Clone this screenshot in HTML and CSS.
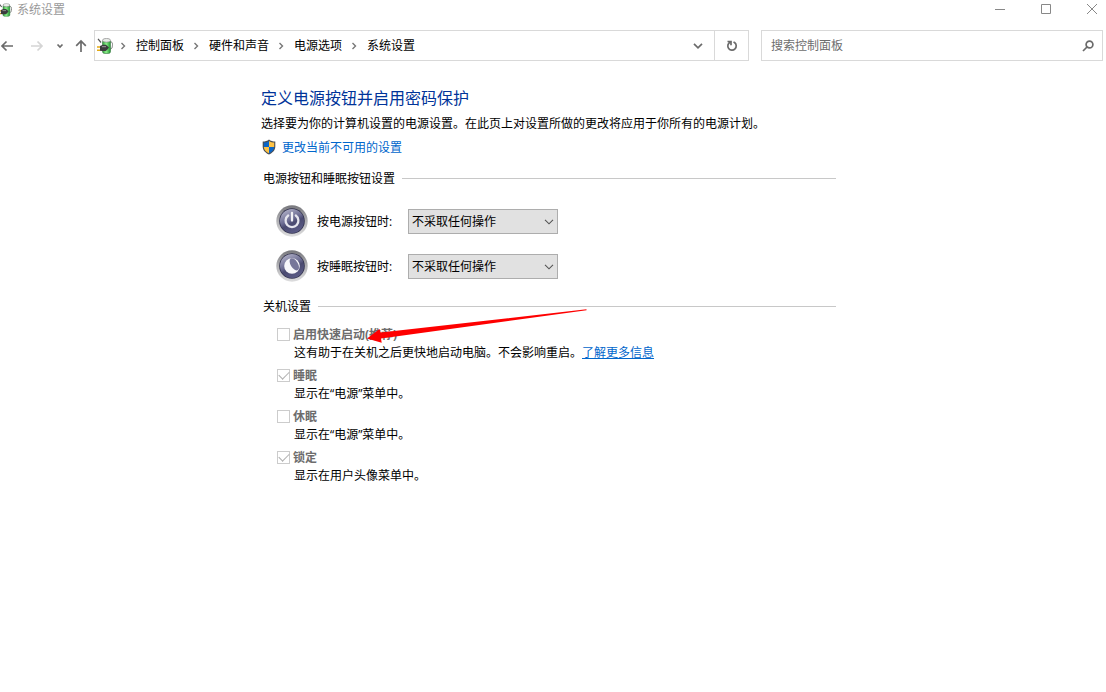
FILE: index.html
```html
<!DOCTYPE html>
<html lang="zh-CN">
<head>
<meta charset="utf-8">
<meta name="viewport" content="width=device-width, initial-scale=1">
<title>系统设置</title>
<link rel="stylesheet" href="styles.css">
</head>
<body>
<svg class="defs" width="0" height="0" aria-hidden="true">
  <defs>
    <linearGradient id="rim" x1="0" y1="0" x2="0" y2="1">
      <stop offset="0" stop-color="#77777c"/><stop offset=".5" stop-color="#b2b2b5"/><stop offset="1" stop-color="#dededf"/>
    </linearGradient>
    <linearGradient id="orb" x1=".2" y1="0" x2=".7" y2="1">
      <stop offset="0" stop-color="#b4b4ca"/><stop offset=".45" stop-color="#6c6c92"/><stop offset=".6" stop-color="#4a4a70"/><stop offset="1" stop-color="#5c5c88"/>
    </linearGradient>
    <linearGradient id="cell" x1="0" y1="0" x2="1" y2="0">
      <stop offset="0" stop-color="#2a9a38"/><stop offset=".45" stop-color="#8ff08c"/><stop offset="1" stop-color="#1f9430"/>
    </linearGradient>
    <symbol id="plug" viewBox="0 0 16 16">
      <path d="M13 4c2.500-.5 2.800 1.500 2.300 4.500-.3 2-1 2.500-2.300 2.500" fill="none" stroke="#777" stroke-width="1"/>
      <rect x="5.500" y="2" width="8" height="13.500" rx="2" fill="url(#cell)" stroke="#3d7a45" stroke-width=".6"/>
      <ellipse cx="9.500" cy="2.300" rx="4" ry="1.900" fill="#e8ece8" stroke="#777" stroke-width=".6"/>
      <path d="M1 .8l3 3.700" stroke="#555" stroke-width="1.200"/>
      <path d="M0 9h3.500M0 12.200h3.500" stroke="#e3a913" stroke-width="1.600"/>
      <path d="M3 8l3-1.300h3l3 2.800-2 2.500-1.500 1H5L3 12.800z" fill="#3b3b3d"/>
      <path d="M5 8.700h4" stroke="#99999c" stroke-width="1"/>
    </symbol>
    <symbol id="crumb" viewBox="0 0 6 8"><path d="M1.500 1l3 3-3 3" fill="none" stroke="#777" stroke-width="1.400"/></symbol>
    <symbol id="drop" viewBox="0 0 10 6"><path d="M1 .8l4 4 4-4" fill="none" stroke="#555" stroke-width="1.100"/></symbol>
  </defs>
</svg>

<header class="titlebar">
  <svg class="app-icon" viewBox="2 0 14 16" aria-hidden="true"><use href="#plug" width="16" height="16"/></svg>
  <span class="title">系统设置</span>
  <div class="window-buttons">
    <button type="button" aria-label="最小化"><svg viewBox="0 0 12 12"><path d="M1 5.500h10"/></svg></button>
    <button type="button" aria-label="最大化"><svg viewBox="0 0 12 12"><path d="M1.500 .5h9v9h-9z"/></svg></button>
    <button type="button" aria-label="关闭"><svg viewBox="0 0 12 12"><path d="M1 0l10 10M11 0L1 10"/></svg></button>
  </div>
</header>

<div class="toolbar">
  <div class="history">
    <button type="button" aria-label="后退"><svg width="14" height="12" viewBox="0 0 14 12"><path d="M13 6H2M6.500 1.500L2 6l4.500 4.500"/></svg></button>
    <button type="button" class="forward" aria-label="前进" disabled><svg width="14" height="12" viewBox="0 0 14 12"><path d="M1 6h11M7.500 1.500L12 6l-4.500 4.500"/></svg></button>
    <button type="button" class="recent" aria-label="最近的位置"><svg width="8" height="6" viewBox="0 0 8 6"><path d="M1.500 1.500L4 4l2.500-2.500"/></svg></button>
    <button type="button" aria-label="向上"><svg width="12" height="14" viewBox="0 0 12 14"><path d="M6 13V2M1.200 6.800L6 2l4.800 4.800"/></svg></button>
  </div>
  <nav class="address" aria-label="地址">
    <svg class="plug" aria-hidden="true"><use href="#plug"/></svg>
    <ol class="crumbs">
      <li><svg aria-hidden="true"><use href="#crumb"/></svg><a href="#">控制面板</a></li>
      <li><svg aria-hidden="true"><use href="#crumb"/></svg><a href="#">硬件和声音</a></li>
      <li><svg aria-hidden="true"><use href="#crumb"/></svg><a href="#">电源选项</a></li>
      <li><svg aria-hidden="true"><use href="#crumb"/></svg><a href="#">系统设置</a></li>
    </ol>
    <button type="button" class="expand" aria-label="展开"><svg width="10" height="8" viewBox="0 0 10 8"><path d="M1 1.800l4 4 4-4"/></svg></button>
    <button type="button" class="refresh" aria-label="刷新"><svg width="12" height="12" viewBox="0 0 12 12"><path d="M4 2.200A4.200 4.200 0 1 0 8.500 2.500M8.500 2.500L7.500 2M1.500 1.500h3.500v3.700"/></svg></button>
  </nav>
  <form class="search" role="search">
    <input type="search" placeholder="搜索控制面板" aria-label="搜索控制面板">
    <button type="submit" aria-label="搜索"><svg width="12" height="12" viewBox="0 0 12 12"><circle cx="7.500" cy="4.500" r="3.400"/><path d="M5 7L1 11"/></svg></button>
  </form>
</div>

<main class="page">
  <h1>定义电源按钮并启用密码保护</h1>
  <p class="intro">选择要为你的计算机设置的电源设置。在此页上对设置所做的更改将应用于你所有的电源计划。</p>
  <p class="elevate">
    <svg viewBox="0 0 14 16" aria-hidden="true">
      <path d="M7 .5C5.500 2 3 2.500.7 2.500v5c0 4 3 6.500 6.300 8 3.300-1.500 6.300-4 6.300-8v-5C11 2.500 8.500 2 7 .5z" fill="#4b4f55"/>
      <path d="M7 2C5.500 3 3.500 3.600 1.800 3.600V8H7z" fill="#0b66c8"/>
      <path d="M7 2c1.500 1 3.500 1.600 5.200 1.600V8H7z" fill="#ffc344"/>
      <path d="M1.800 8H7v6.300C4 12.900 2 11 1.800 8z" fill="#ffc344"/>
      <path d="M12.200 8H7v6.300C10 12.900 12 11 12.200 8z" fill="#0b66c8"/>
    </svg>
    <a href="#">更改当前不可用的设置</a>
  </p>

  <section>
    <h2>电源按钮和睡眠按钮设置</h2>
    <div class="actions">
      <div class="action">
        <svg class="orb" viewBox="0 0 32 32" aria-hidden="true">
          <circle cx="16" cy="16" r="15.700" fill="url(#rim)"/><circle cx="16" cy="16" r="12.800" fill="#33334f"/><circle cx="16" cy="16" r="12" fill="url(#orb)"/>
          <path d="M12.200 10.500a6.400 6.400 0 1 0 7.600 0" fill="none" stroke="#e6e6ee" stroke-width="2.300" stroke-linecap="round"/>
          <path d="M16 8v7.500" stroke="#f1f1f5" stroke-width="2.300" stroke-linecap="round"/>
        </svg>
        <label for="power">按电源按钮时:</label>
        <div class="picker">
          <select id="power"><option>不采取任何操作</option></select>
          <svg aria-hidden="true"><use href="#drop"/></svg>
        </div>
      </div>
      <div class="action">
        <svg class="orb" viewBox="0 0 32 32" aria-hidden="true">
          <circle cx="16" cy="16" r="15.700" fill="url(#rim)"/><circle cx="16" cy="16" r="12.800" fill="#33334f"/><circle cx="16" cy="16" r="12" fill="url(#orb)"/>
          <circle cx="16" cy="16" r="7.800" fill="#f7f7fa"/>
          <ellipse cx="18.300" cy="14.300" rx="3.600" ry="6.800" transform="rotate(-32 18.300 14.300)" fill="#77779a"/>
        </svg>
        <label for="sleep">按睡眠按钮时:</label>
        <div class="picker">
          <select id="sleep"><option>不采取任何操作</option></select>
          <svg aria-hidden="true"><use href="#drop"/></svg>
        </div>
      </div>
    </div>
  </section>

  <section class="shutdown">
    <h2>关机设置</h2>
    <ul class="options">
      <li>
        <input type="checkbox" id="fast" disabled>
        <label for="fast">启用快速启动(推荐)</label>
        <p>这有助于在关机之后更快地启动电脑。不会影响重启。<a href="#">了解更多信息</a></p>
      </li>
      <li>
        <input type="checkbox" id="show-sleep" checked disabled>
        <label for="show-sleep">睡眠</label>
        <p>显示在“电源”菜单中。</p>
      </li>
      <li>
        <input type="checkbox" id="hibernate" disabled>
        <label for="hibernate">休眠</label>
        <p>显示在“电源”菜单中。</p>
      </li>
      <li>
        <input type="checkbox" id="lock" checked disabled>
        <label for="lock">锁定</label>
        <p>显示在用户头像菜单中。</p>
      </li>
    </ul>
    <svg class="pointer" viewBox="0 0 220 34" aria-hidden="true"><path d="M0 29.500L12.500 20l1.200 3.500L219.500 .3v1L14 29.500l.7 4.200z" fill="#fe0000"/></svg>
  </section>
</main>
</body>
</html>
```

FILE: styles.css
```css
* {
  box-sizing: border-box;
}

body {
  margin: 0;
  background: #fff;
  color: #000;
  font: 12px/18px "Open Sans", "Noto Sans CJK SC", sans-serif;
}

h1, h2, p, ol, ul {
  margin: 0;
  padding: 0;
  font-weight: 400;
  list-style: none;
}

button {
  display: flex;
  align-items: center;
  justify-content: center;
  padding: 0;
  border: 0;
  background: none;
}

button svg {
  fill: none;
  stroke: #6b6b6b;
  stroke-width: 1.7;
}

input, select {
  font: inherit;
}

a {
  color: #0066cc;
}

.defs {
  position: absolute;
}

/* Title bar */
.titlebar {
  display: flex;
  align-items: center;
  height: 20px;
}

.app-icon {
  width: 12px;
  height: 16px;
}

.title {
  flex: 1;
  padding-left: 5px;
  color: #999;
}

.window-buttons {
  display: flex;
}

.window-buttons button {
  width: 46px;
  height: 18px;
  padding-left: 16px;
}

.window-buttons button:last-child {
  width: 45px;
}

.window-buttons svg {
  width: 12px;
  height: 12px;
  stroke: #888;
  stroke-width: 1;
}

/* Navigation row */
.toolbar {
  display: flex;
  margin-top: 10px;
  padding-right: 3px;
  height: 31px;
}

.history {
  display: flex;
  align-items: center;
  width: 94px;
}

.history .forward {
  margin-left: 16px;
}

.history .forward svg {
  stroke: #d5d5d5;
}

.history .recent {
  margin: 0 11px 0 12px;
}

.address {
  display: flex;
  flex: 1;
  align-items: center;
  border: 1px solid #d9d9d9;
  padding-left: 2px;
}

.plug {
  width: 16px;
  height: 16px;
}

.crumbs {
  display: flex;
  flex: 1;
  padding-left: 7px;
  white-space: nowrap;
}

.crumbs li {
  display: flex;
  align-items: center;
  padding-right: 9px;
}

.crumbs svg {
  width: 6px;
  height: 8px;
  margin-right: 10px;
}

.crumbs a {
  color: #000;
  text-decoration: none;
}

.address button {
  height: 100%;
  width: 34px;
}

.address .expand {
  width: 32px;
}

.address .refresh {
  border-left: 1px solid #d9d9d9;
}

.search {
  display: flex;
  width: 342px;
  margin-left: 12px;
  border: 1px solid #d9d9d9;
}

.search input {
  flex: 1;
  min-width: 0;
  padding: 0 0 0 9px;
  border: 0;
  background: none;
}

.search input::placeholder {
  color: #6d6d6d;
  opacity: 1;
}

.search button {
  width: 28px;
}

/* Page content */
.page {
  max-width: 836px;
  padding: 25px 0 0 261px;
}

h1 {
  color: #003399;
  font-size: 16px;
  line-height: 24px;
}

.intro {
  line-height: 28px;
}

.elevate {
  display: flex;
  align-items: center;
  gap: 6px;
  height: 20px;
  padding-left: 1px;
}

.elevate svg {
  width: 14px;
  height: 16px;
  margin-bottom: 2px;
}

.elevate a {
  text-decoration: none;
}

section {
  margin-top: 11px;
}

h2 {
  display: flex;
  align-items: center;
  gap: 7px;
  padding-left: 2px;
  font-size: 12px;
  line-height: 20px;
}

h2::after {
  content: "";
  flex: 1;
  height: 1px;
  margin-bottom: 2px;
  background: #c8c8c8;
}

.actions {
  padding: 10px 0 0 15px;
}

.action {
  display: flex;
  align-items: center;
  height: 45px;
}

.orb {
  width: 32px;
  height: 32px;
  margin-bottom: 2px;
}

.action label {
  width: 91px;
  margin-left: 9px;
}

.picker {
  display: grid;
  align-items: center;
  width: 150px;
}

.picker > * {
  grid-area: 1 / 1;
}

.picker select {
  width: 100%;
  height: 25px;
  padding: 0 20px 0 3px;
  border: 1px solid #adadad;
  border-radius: 0;
  background: #e1e1e1;
  color: #000;
  appearance: none;
}

.picker svg {
  justify-self: end;
  width: 10px;
  height: 6px;
  margin-right: 4px;
  pointer-events: none;
}

/* Shutdown options */
.shutdown {
  position: relative;
  margin-top: 8px;
}

.options {
  display: grid;
  gap: 5px;
  padding: 9px 0 0 16px;
}

.options li {
  display: grid;
  grid-template-columns: 13px 1fr;
  column-gap: 3px;
  align-items: center;
}

.options input {
  display: grid;
  place-items: center;
  width: 13px;
  height: 13px;
  margin: 0 0 1px;
  border: 1px solid #ccc;
  background: #fff;
  appearance: none;
}

.options input:checked::before {
  content: "";
  width: 9px;
  height: 5px;
  margin-bottom: 4px;
  border: solid #b0b0b0;
  border-width: 0 0 1px 1px;
  transform: rotate(-45deg);
}

.options label {
  color: #6d6d6d;
  font-weight: 700;
}

.options p {
  grid-column: 2;
  padding-left: 1px;
}

/* Red arrow drawn over the fast-startup option */
.pointer {
  position: absolute;
  top: 12px;
  left: 106px;
  width: 220px;
  height: 34px;
  pointer-events: none;
}
```
